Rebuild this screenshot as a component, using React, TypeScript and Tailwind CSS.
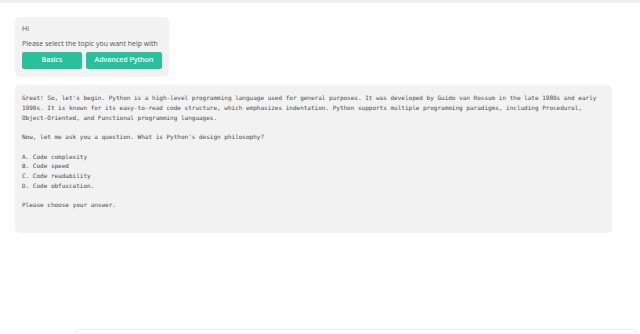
export default function App() {
  const answerText = `Great! So, let's begin. Python is a high-level programming language used for general purposes. It was developed by Guido van Rossum in the late 1980s and early 1990s. It is known for its easy-to-read code structure, which emphasizes indentation. Python supports multiple programming paradigms, including Procedural, Object-Oriented, and Functional programming languages.

Now, let me ask you a question. What is Python's design philosophy?

A. Code complexity
B. Code speed
C. Code readability
D. Code obfuscation.

Please choose your answer.`;

  return (
    <div className="relative h-[334px] w-[640px] overflow-hidden bg-white">
      <div className="h-[3px] w-full bg-[#eeeeee]" />

      <div className="flex flex-col items-start gap-[8px] pl-[15px] pr-[28px] pt-[14px]">
        {/* greeting bubble */}
        <div className="rounded-[5px] bg-[#f2f2f2] px-[7px] pb-[8px] pt-[7px] font-['Open_Sans',sans-serif] text-[7px] text-[#555]">
          <p className="leading-[10px]">Hi</p>
          <p className="mt-[5px] leading-[10px]">Please select the topic you want help with</p>
          <div className="mt-[3px] flex gap-[4px]">
            <button className="h-[17px] w-[60px] rounded-[2px] bg-[#26c29b] text-[7px] font-semibold text-white">
              Basics
            </button>
            <button className="h-[17px] w-[76px] rounded-[2px] bg-[#26c29b] text-[7px] font-semibold text-white">
              Advanced Python
            </button>
          </div>
        </div>

        {/* answer bubble */}
        <div className="w-full rounded-[5px] bg-[#f2f2f2] px-[7px] pb-[23px] pt-[8px]">
          <pre className="whitespace-pre-wrap font-['DejaVu_Sans_Mono',monospace] text-[6px] leading-[9.75px] text-[#4a4a4a]">
            {answerText}
          </pre>
        </div>
      </div>

      {/* message input edge */}
      <div className="absolute left-[76px] top-[329px] h-[20px] w-[560px] rounded-t-[4px] border border-[#ececec] bg-white" />
    </div>
  );
}
